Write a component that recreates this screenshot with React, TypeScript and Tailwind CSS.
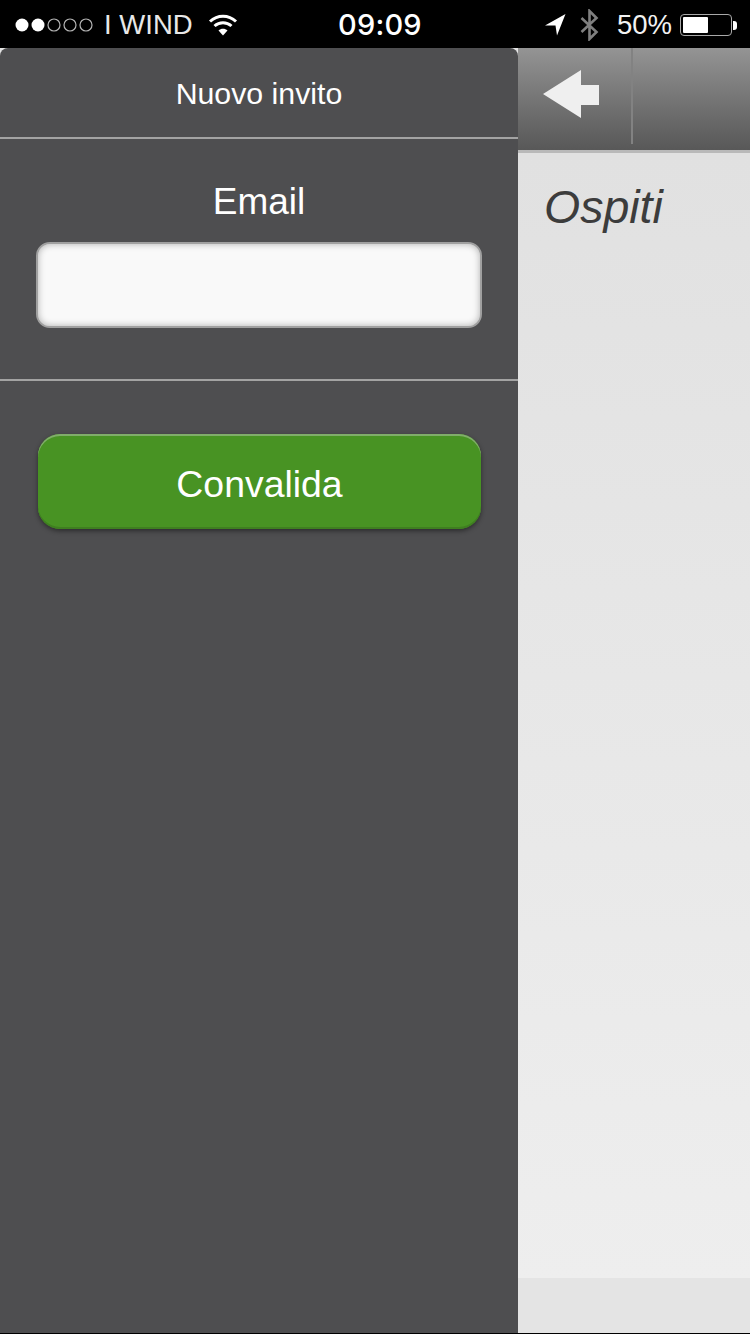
import React from "react";

const sans = "font-['Liberation_Sans',Arial,sans-serif]";

const StatusBar: React.FC = () => (
  <div className={`relative flex h-12 shrink-0 items-center justify-between bg-black pl-[15px] pr-[13px] pt-[2px] text-[27.5px] leading-none text-white ${sans}`}>
    <div className="flex items-center">
      <svg width="82" height="16" viewBox="0 0 82 16" className="mr-[7px]">
        <circle cx="7" cy="8" r="6.5" fill="#fff" />
        <circle cx="23" cy="8" r="6.5" fill="#fff" />
        <circle cx="39" cy="8" r="6" fill="none" stroke="#b5b5b5" strokeWidth="1.2" />
        <circle cx="55" cy="8" r="6" fill="none" stroke="#b5b5b5" strokeWidth="1.2" />
        <circle cx="71" cy="8" r="6" fill="none" stroke="#b5b5b5" strokeWidth="1.2" />
      </svg>
      <span className="text-[#e8e8e8]">I WIND</span>
      <svg width="30" height="22" viewBox="0 0 30 22" className="ml-[15px]" fill="none" stroke="#fff" strokeWidth="3">
        <path d="M2 7.500C9.500 .5 20.500 .5 28 7.500" />
        <path d="M6.500 12C11.500 7.500 18.500 7.500 23.500 12" />
        <path d="M15 21.500L10.500 16.500C13 14 17 14 19.500 16.500Z" fill="#fff" stroke="none" />
      </svg>
    </div>
    <span className="absolute left-[338px] top-[10px] font-['Inter',sans-serif] text-[29px] font-medium leading-[30px] tracking-[0.2px]">09:09</span>
    <div className="flex items-center">
      <svg width="21" height="22" viewBox="0 0 21 22">
        <path d="M0 11.500L20.500 0L12 21.500L10.500 11.500Z" fill="#fff" />
      </svg>
      <svg width="19" height="32" viewBox="0 0 19 32" className="ml-[14px]" fill="none" stroke="#7f7f7f" strokeWidth="2.600">
        <path d="M1.500 9L16.500 23L9.500 30V2L16.500 9L1.500 23" />
      </svg>
      <span className="ml-[18px] text-[#f2f2f2]">50%</span>
      <div className="ml-[8px] flex items-center">
        <div className="h-[22px] w-[52px] rounded-[4px] border border-[#a8a8a8] p-[2px]">
          <div className="h-full w-[25px] rounded-[1px] bg-white" />
        </div>
        <div className="ml-[1px] h-[9px] w-[4px] rounded-r-[3px] bg-white" />
      </div>
    </div>
  </div>
);

const SidePanel: React.FC = () => (
  <div className={`flex w-[518px] shrink-0 flex-col rounded-t-[8px] bg-[#4e4e50] text-white ${sans}`}>
    <div className="flex h-[91px] items-center justify-center border-b-2 border-[#a3a3a3] pt-[3px] text-[30.3px]">
      Nuovo invito
    </div>
    <div className="flex h-[242px] flex-col items-center border-b-2 border-[#a3a3a3] px-9 pt-[41px]">
      <div className="text-[37px] leading-[44px]">Email</div>
      <div className="mt-[18px] h-[86px] w-full rounded-[14px] border-2 border-[#a0a0a0] bg-[#f9f9f9] shadow-[inset_0_0_7px_rgba(0,0,0,0.3)]" />
    </div>
    <div className="pl-[38px] pt-[53px]">
      <div className="flex h-[95px] w-[443px] items-center justify-center rounded-[22px] bg-[#489323] pt-[5px] text-[37.4px] shadow-[inset_0_2px_0_#80ad6a,inset_0_-2px_0_#3f7f20,0_2px_5px_rgba(0,0,0,0.45)]">
        Convalida
      </div>
    </div>
  </div>
);

const BackArrow: React.FC = () => (
  <svg width="56" height="48" viewBox="0 0 56 48" className="blur-[0.6px]">
    <path d="M0 24L38 0V15H56V35H38V48Z" fill="#efefef" />
  </svg>
);

export default function App() {
  return (
    <div className="flex h-[1334px] w-[750px] flex-col overflow-hidden bg-black">
      <StatusBar />
      <div className="flex h-[1285px] shrink-0 bg-[#e4e4e4]">
        <SidePanel />
        <div className="flex min-w-0 flex-1 flex-col">
          <div className="flex h-[105px] shrink-0 border-b-[3px] border-[#b9b9b9] bg-gradient-to-b from-[#949494] to-[#585858]">
            <div className="flex w-[113px] items-center justify-center pb-[10px] pr-[7px]">
              <BackArrow />
            </div>
            <div className="mb-[6px] w-[2px] bg-[#828282]" />
          </div>
          <div className={`h-[1125px] shrink-0 bg-gradient-to-b from-[#e1e1e1] to-[#eeeeee] pl-[26px] pt-[27px] text-[46.5px] italic leading-[54px] text-[#3c3c3c] ${sans}`}>
            Ospiti
          </div>
          <div className="flex-1 bg-[#e4e4e4]" />
        </div>
      </div>
      <div className="h-px bg-black" />
    </div>
  );
}
